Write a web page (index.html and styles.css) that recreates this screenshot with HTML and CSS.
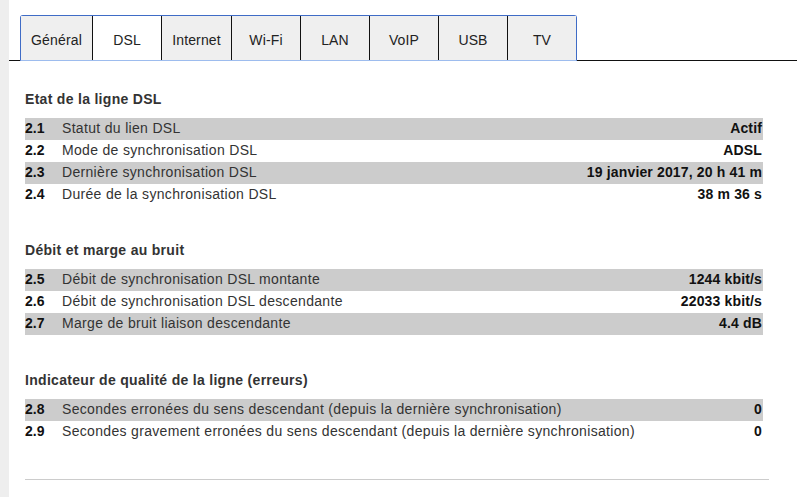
FILE: index.html
```html
<!DOCTYPE html>
<html lang="fr">
<head>
<meta charset="utf-8">
<title>DSL</title>
<link rel="stylesheet" href="styles.css">
</head>
<body>
<div class="page">
  <div class="side"></div>
  <div class="main">
    <div class="tabbar">
      <div class="line-left"></div>
      <div class="tabs">
        <div class="tab w72">Général</div>
        <div class="tab active w69">DSL</div>
        <div class="tab w70">Internet</div>
        <div class="tab w69">Wi-Fi</div>
        <div class="tab w69">LAN</div>
        <div class="tab w69">VoIP</div>
        <div class="tab w69">USB</div>
        <div class="tab last w69">TV</div>
      </div>
      <div class="line-right"></div>
    </div>

    <div class="content">
      <section class="section first">
        <h2>Etat de la ligne DSL</h2>
        <div class="row odd"><span class="num">2.1</span><span class="label">Statut du lien DSL</span><span class="val">Actif</span></div>
        <div class="row"><span class="num">2.2</span><span class="label">Mode de synchronisation DSL</span><span class="val">ADSL</span></div>
        <div class="row odd"><span class="num">2.3</span><span class="label">Dernière synchronisation DSL</span><span class="val">19 janvier 2017, 20 h 41 m</span></div>
        <div class="row"><span class="num">2.4</span><span class="label">Durée de la synchronisation DSL</span><span class="val">38 m 36 s</span></div>
      </section>

      <section class="section">
        <h2>Débit et marge au bruit</h2>
        <div class="row odd"><span class="num">2.5</span><span class="label">Débit de synchronisation DSL montante</span><span class="val">1244 kbit/s</span></div>
        <div class="row"><span class="num">2.6</span><span class="label">Débit de synchronisation DSL descendante</span><span class="val">22033 kbit/s</span></div>
        <div class="row odd"><span class="num">2.7</span><span class="label">Marge de bruit liaison descendante</span><span class="val">4.4 dB</span></div>
      </section>

      <section class="section last">
        <h2>Indicateur de qualité de la ligne (erreurs)</h2>
        <div class="row odd"><span class="num">2.8</span><span class="label">Secondes erronées du sens descendant (depuis la dernière synchronisation)</span><span class="val">0</span></div>
        <div class="row"><span class="num">2.9</span><span class="label">Secondes gravement erronées du sens descendant (depuis la dernière synchronisation)</span><span class="val">0</span></div>
      </section>

      <hr class="sep">
    </div>
  </div>
</div>
</body>
</html>
```

FILE: styles.css
```css
html, body {
  margin: 0;
  padding: 0;
  background: #fff;
}

body {
  font-family: "Liberation Sans", Arial, sans-serif;
  font-size: 14px;
  color: #333;
}

.page {
  display: flex;
  min-height: 497px;
}

.side {
  width: 9px;
  flex: none;
  background: #eeeeee;
}

.main {
  flex: 1;
  min-width: 0;
}

/* Tabs */
.tabbar {
  display: flex;
  align-items: flex-end;
  padding-top: 15px;
}

.line-left {
  width: 11px;
  border-bottom: 1px solid #111;
}

.line-right {
  flex: 1;
  border-bottom: 1px solid #111;
}

.tabs {
  display: flex;
  border: 1px solid #3f6cc6;
  border-bottom: 1px solid #9dbcee;
  border-radius: 3px 3px 0 0;
}

.tab {
  box-sizing: border-box;
  height: 44px;
  padding-top: 4px;
  line-height: 40px;
  text-align: center;
  background: #efefef;
  color: #222;
  border-right: 1px solid #111;
  font-size: 14px;
  letter-spacing: 0.15px;
}

.tab.active {
  background: #fff;
}

.tab.last {
  border-right: none;
}

.w72 { width: 72px; }
.w70 { width: 70px; }
.w69 { width: 69px; }
.tab.last.w69 { width: 68px; }

/* Content */
.content {
  padding: 0 34px 0 16px;
}

.section {
  margin-top: 35px;
}

.section.first {
  margin-top: 29px;
}

.section.last {
  margin-top: 36px;
}

.section h2 {
  margin: 0 0 10px;
  font-size: 14px;
  line-height: 18px;
  font-weight: bold;
  color: #333;
  letter-spacing: 0.3px;
}

.row {
  display: flex;
  height: 22px;
  box-sizing: border-box;
  line-height: 21px;
  padding-bottom: 1px;
}

.row.odd {
  background: #cccccc;
}

.num {
  width: 37px;
  flex: none;
  font-weight: bold;
  color: #111;
}

.label {
  flex: 1;
  white-space: nowrap;
  color: #333;
  letter-spacing: 0.32px;
}

.val {
  font-weight: bold;
  color: #111;
  white-space: nowrap;
  padding-right: 1px;
  letter-spacing: 0.15px;
}

.sep {
  margin: 36px -6px 0 0;
  border: none;
  border-top: 1px solid #cccccc;
  height: 0;
}
```
